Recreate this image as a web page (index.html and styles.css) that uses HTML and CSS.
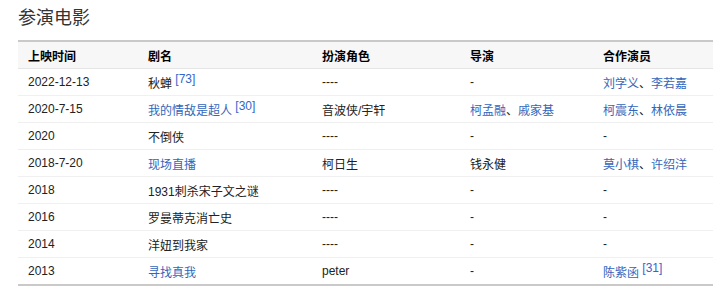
FILE: index.html
```html
<!DOCTYPE html>
<html lang="zh">
<head>
    <meta charset="UTF-8">
    <title>参演电影</title>
    <link rel="stylesheet" href="styles.css">
</head>
<body>
    <div class="section">
        <h3 class="section-title">参演电影</h3>
        <table class="films">
            <colgroup>
                <col class="c-date">
                <col class="c-name">
                <col class="c-role">
                <col class="c-dir">
                <col class="c-cast">
            </colgroup>
            <thead>
                <tr><th>上映时间</th><th>剧名</th><th>扮演角色</th><th>导演</th><th>合作演员</th></tr>
            </thead>
            <tbody>
                <tr><td>2022-12-13</td><td>秋蝉 <sup class="ref">[73]</sup></td><td>----</td><td>-</td><td><a href="#">刘学义</a>、<a href="#">李若嘉</a></td></tr>
                <tr><td>2020-7-15</td><td><a href="#">我的情敌是超人</a> <sup class="ref">[30]</sup></td><td>音波侠/宇轩</td><td><a href="#">柯孟融</a>、<a href="#">戚家基</a></td><td><a href="#">柯震东</a>、<a href="#">林依晨</a></td></tr>
                <tr><td>2020</td><td>不倒侠</td><td>----</td><td>-</td><td>-</td></tr>
                <tr><td>2018-7-20</td><td><a href="#">现场直播</a></td><td>柯日生</td><td>钱永健</td><td><a href="#">莫小棋</a>、<a href="#">许绍洋</a></td></tr>
                <tr><td>2018</td><td>1931刺杀宋子文之谜</td><td>----</td><td>-</td><td>-</td></tr>
                <tr><td>2016</td><td>罗曼蒂克消亡史</td><td>----</td><td>-</td><td>-</td></tr>
                <tr><td>2014</td><td>洋妞到我家</td><td>----</td><td>-</td><td>-</td></tr>
                <tr><td>2013</td><td><a href="#">寻找真我</a></td><td>peter</td><td>-</td><td><a href="#">陈紫函</a> <sup class="ref">[31]</sup></td></tr>
            </tbody>
        </table>
    </div>
</body>
</html>
```

FILE: styles.css
```css
body {
    margin: 0;
    font-family: "Liberation Sans", Arial, "Noto Sans CJK SC", sans-serif;
    font-size: 12px;
    color: #333;
    background: #fff;
}
.section {
    padding: 7px 0 0 18px;
}
.section-title {
    margin: 0 0 11px 0;
    font-size: 18px;
    font-weight: normal;
    line-height: 22px;
    color: #333;
}
.films {
    width: 710px;
    border-collapse: collapse;
    table-layout: fixed;
    border-top: 2px solid #c9c9c9;
    border-bottom: 2px solid #c9c9c9;
}
.c-date { width: 120px; }
.c-name { width: 174px; }
.c-role { width: 148px; }
.c-dir { width: 133px; }
.films th {
    background: #f7f7f7;
    text-align: left;
    font-weight: bold;
    color: #000;
    height: 26px;
    padding: 0 10px;
    border-bottom: 1px solid #e5e5e5;
}
.films td {
    height: 26px;
    padding: 0 10px;
    color: #222;
    border-bottom: 1px solid #f0f0f0;
    white-space: nowrap;
}
.films tbody tr:last-child td {
    border-bottom: none;
}
.films a {
    color: #3366bb;
    text-decoration: none;
}
.ref {
    color: #3366cc;
    font-size: 12px;
    vertical-align: 5px;
    line-height: 0;
}
```
